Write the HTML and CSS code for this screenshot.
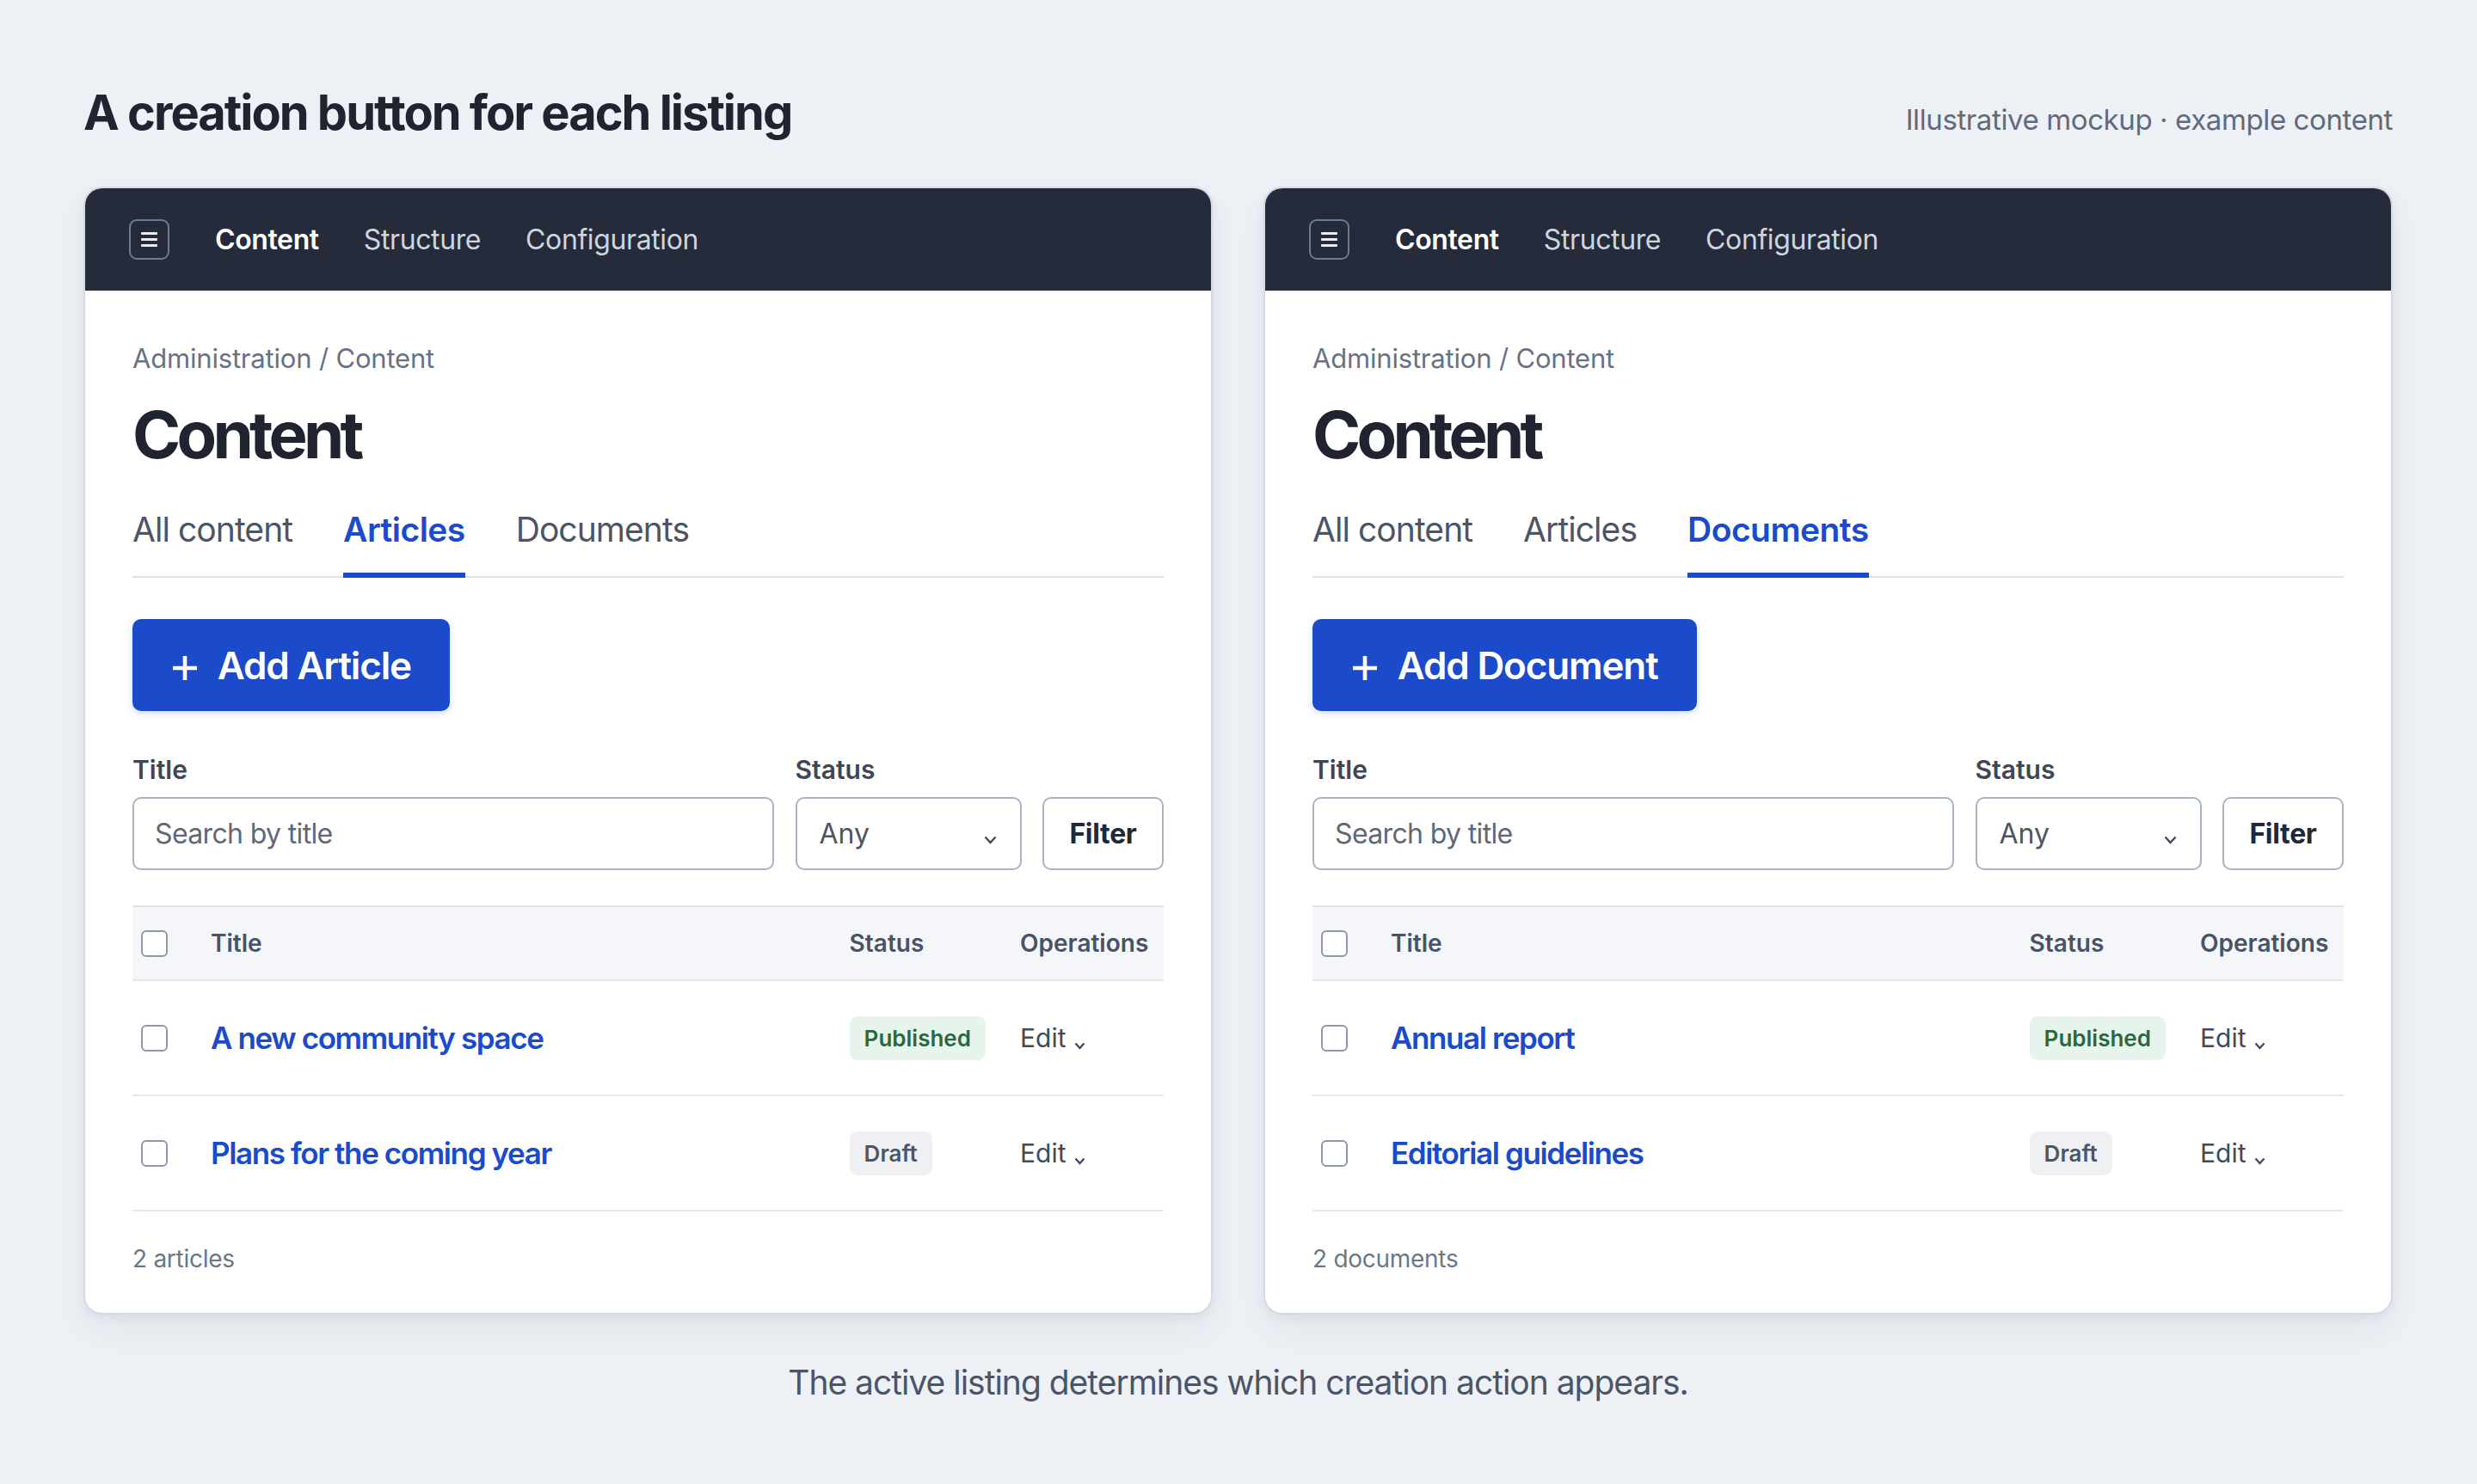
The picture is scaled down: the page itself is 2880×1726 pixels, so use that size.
FILE: index.html
```html
<!DOCTYPE html>
<html lang="en">
<head>
<meta charset="utf-8">
<title>A creation button for each listing</title>
<link rel="stylesheet" href="styles.css">
</head>
<body>
<div class="page">
  <header class="page-head">
    <h1 class="page-title">A creation button for each listing</h1>
    <p class="page-note">Illustrative mockup · example content</p>
  </header>

  <div class="panels">
    <section class="card">
      <nav class="topbar">
        <span class="menu-btn"><span></span><span></span><span></span></span>
        <a class="top-link is-active">Content</a>
        <a class="top-link">Structure</a>
        <a class="top-link">Configuration</a>
      </nav>
      <div class="card-body">
        <div class="crumbs">Administration / Content</div>
        <h2 class="heading">Content</h2>
        <div class="tabs">
          <span class="tab">All content</span>
          <span class="tab is-active">Articles</span>
          <span class="tab">Documents</span>
        </div>
        <button class="add-btn" type="button">
          <svg class="plus" width="28" height="28" viewBox="0 0 28 28"><path d="M14 0v28M0 14h28" stroke="currentColor" stroke-width="4.6" fill="none"/></svg>
          <span>Add Article</span>
        </button>
        <form class="filters">
          <label class="field">
            <span class="field-label">Title</span>
            <input class="input" type="text" placeholder="Search by title">
          </label>
          <div class="field">
            <span class="field-label">Status</span>
            <div class="select"><span>Any</span><svg width="15" height="10" viewBox="0 0 15 10"><polyline points="1.5,1.5 7.5,8 13.5,1.5" fill="none" stroke="currentColor" stroke-width="2.4"/></svg></div>
          </div>
          <button class="filter-btn" type="button">Filter</button>
        </form>
        <div class="table">
          <div class="row head">
            <div class="cell"><span class="check"></span></div>
            <div class="cell">Title</div>
            <div class="cell">Status</div>
            <div class="cell">Operations</div>
          </div>
          <div class="row">
            <div class="cell"><span class="check"></span></div>
            <div class="cell"><a class="title-link">A new community space</a></div>
            <div class="cell"><span class="badge badge-published">Published</span></div>
            <div class="cell edit">Edit<svg width="13" height="9" viewBox="0 0 13 9"><polyline points="1.5,1.5 6.5,7 11.5,1.5" fill="none" stroke="currentColor" stroke-width="2.3"/></svg></div>
          </div>
          <div class="row">
            <div class="cell"><span class="check"></span></div>
            <div class="cell"><a class="title-link">Plans for the coming year</a></div>
            <div class="cell"><span class="badge badge-draft">Draft</span></div>
            <div class="cell edit">Edit<svg width="13" height="9" viewBox="0 0 13 9"><polyline points="1.5,1.5 6.5,7 11.5,1.5" fill="none" stroke="currentColor" stroke-width="2.3"/></svg></div>
          </div>
        </div>
        <p class="count">2 articles</p>
      </div>
    </section>

    <section class="card">
      <nav class="topbar">
        <span class="menu-btn"><span></span><span></span><span></span></span>
        <a class="top-link is-active">Content</a>
        <a class="top-link">Structure</a>
        <a class="top-link">Configuration</a>
      </nav>
      <div class="card-body">
        <div class="crumbs">Administration / Content</div>
        <h2 class="heading">Content</h2>
        <div class="tabs">
          <span class="tab">All content</span>
          <span class="tab">Articles</span>
          <span class="tab is-active">Documents</span>
        </div>
        <button class="add-btn" type="button">
          <svg class="plus" width="28" height="28" viewBox="0 0 28 28"><path d="M14 0v28M0 14h28" stroke="currentColor" stroke-width="4.6" fill="none"/></svg>
          <span>Add Document</span>
        </button>
        <form class="filters">
          <label class="field">
            <span class="field-label">Title</span>
            <input class="input" type="text" placeholder="Search by title">
          </label>
          <div class="field">
            <span class="field-label">Status</span>
            <div class="select"><span>Any</span><svg width="15" height="10" viewBox="0 0 15 10"><polyline points="1.5,1.5 7.5,8 13.5,1.5" fill="none" stroke="currentColor" stroke-width="2.4"/></svg></div>
          </div>
          <button class="filter-btn" type="button">Filter</button>
        </form>
        <div class="table">
          <div class="row head">
            <div class="cell"><span class="check"></span></div>
            <div class="cell">Title</div>
            <div class="cell">Status</div>
            <div class="cell">Operations</div>
          </div>
          <div class="row">
            <div class="cell"><span class="check"></span></div>
            <div class="cell"><a class="title-link">Annual report</a></div>
            <div class="cell"><span class="badge badge-published">Published</span></div>
            <div class="cell edit">Edit<svg width="13" height="9" viewBox="0 0 13 9"><polyline points="1.5,1.5 6.5,7 11.5,1.5" fill="none" stroke="currentColor" stroke-width="2.3"/></svg></div>
          </div>
          <div class="row">
            <div class="cell"><span class="check"></span></div>
            <div class="cell"><a class="title-link">Editorial guidelines</a></div>
            <div class="cell"><span class="badge badge-draft">Draft</span></div>
            <div class="cell edit">Edit<svg width="13" height="9" viewBox="0 0 13 9"><polyline points="1.5,1.5 6.5,7 11.5,1.5" fill="none" stroke="currentColor" stroke-width="2.3"/></svg></div>
          </div>
        </div>
        <p class="count">2 documents</p>
      </div>
    </section>
  </div>

  <p class="caption">The active listing determines which creation action appears.</p>
</div>
</body>
</html>
```

FILE: styles.css
```css
* {
  box-sizing: border-box;
  margin: 0;
  padding: 0;
}

html,
body {
  background: #edf0f5;
}

body {
  font-family: Inter, "Noto Sans", "Liberation Sans", sans-serif;
  color: #1f2533;
}

.page {
  padding: 97px 98px 0 97px;
}

.page-head {
  display: flex;
  justify-content: space-between;
  align-items: baseline;
  margin-bottom: 52px;
}

.page-title {
  font-size: 56px;
  line-height: 68px;
  font-weight: 700;
  letter-spacing: -0.036em;
  color: #1f2430;
}

.page-note {
  font-size: 33px;
  line-height: 40px;
  letter-spacing: -0.012em;
  color: #5f6b7c;
}

.panels {
  display: grid;
  grid-template-columns: 1fr 1fr;
  column-gap: 59px;
}

.card {
  background: #fff;
  border: 2px solid #d4dbe6;
  border-radius: 22px;
  overflow: hidden;
  box-shadow: 0 4px 12px rgba(31, 41, 64, 0.05), 0 18px 40px rgba(31, 41, 64, 0.05);
}

.topbar {
  height: 119px;
  background: #252b3b;
  display: flex;
  align-items: center;
  padding-left: 51px;
}

.menu-btn {
  width: 47px;
  height: 47px;
  border: 2px solid #6c7b94;
  border-radius: 9px;
  display: flex;
  flex-direction: column;
  align-items: center;
  justify-content: center;
  gap: 3.7px;
  margin-right: 53px;
}

.menu-btn span {
  width: 19px;
  height: 3px;
  background: #e8ebf0;
  border-radius: 1px;
}

.top-link {
  font-size: 32px;
  line-height: 40px;
  letter-spacing: -0.012em;
  color: #cfd5de;
  text-decoration: none;
  margin-right: 52px;
}

.top-link.is-active {
  color: #fff;
  font-weight: 600;
}

.card-body {
  padding: 59.3px 55px 46.3px;
}

.crumbs {
  font-size: 31px;
  line-height: 40px;
  letter-spacing: -0.006em;
  color: #677286;
}

.heading {
  margin-top: 22.3px;
  font-size: 76px;
  line-height: 90px;
  font-weight: 700;
  letter-spacing: -0.062em;
  color: #1f2430;
}

.tabs {
  display: flex;
  gap: 59px;
  margin-top: 42.5px;
  border-bottom: 2px solid #dde2ea;
}

.tab {
  font-size: 39px;
  line-height: 48px;
  letter-spacing: -0.024em;
  color: #4b5565;
  padding-bottom: 25.9px;
  border-bottom: 6px solid transparent;
  margin-bottom: -2px;
}

.tab.is-active {
  color: #1a4bcc;
  font-weight: 600;
  letter-spacing: -0.014em;
  border-bottom-color: #1a4bcc;
}

.add-btn {
  margin-top: 48.3px;
  height: 107px;
  width: max-content;
  padding: 0 45px 0 46.7px;
  display: flex;
  align-items: center;
  gap: 24px;
  background: #1b4acb;
  color: #fff;
  border: none;
  border-radius: 10px;
  font-family: inherit;
  font-size: 44px;
  font-weight: 600;
  letter-spacing: -0.026em;
  line-height: 1;
  box-shadow: 0 3px 8px rgba(27, 74, 203, 0.18);
}

.add-btn .plus {
  margin-top: 7px;
  flex: none;
}

.filters {
  margin-top: 49.8px;
  display: grid;
  grid-template-columns: 1fr 263px 141px;
  column-gap: 24.5px;
  align-items: end;
}

.field {
  display: block;
}

.field-label {
  display: block;
  font-size: 30px;
  line-height: 36px;
  font-weight: 600;
  color: #3d4758;
  margin-bottom: 13.6px;
}

.input,
.select,
.filter-btn {
  height: 85px;
  border: 2px solid #a9b3c2;
  border-radius: 10px;
  background: #fff;
  font-family: inherit;
  font-size: 32px;
}

.input {
  display: block;
  width: 100%;
  padding: 0 24px;
  letter-spacing: -0.02em;
  color: #1f2533;
  outline: none;
}

.input::placeholder {
  color: #5f6878;
}

.select {
  display: flex;
  align-items: center;
  justify-content: space-between;
  padding: 0 27px 0 26px;
  color: #4b5563;
}

.select svg {
  color: #3f4b5e;
  margin-top: 16px;
}

.filter-btn {
  font-weight: 700;
  letter-spacing: -0.01em;
  color: #1f2937;
}

.table {
  margin-top: 41.4px;
}

.row {
  display: grid;
  grid-template-columns: 81px 1fr 198.4px 177px;
  align-items: center;
  height: 134px;
  border-bottom: 2px solid #e4e8ee;
}

.row.head {
  height: 88.3px;
  background: #f4f6f9;
  border-top: 2px solid #dfe4eb;
  font-size: 28px;
  font-weight: 600;
  color: #475366;
}

.cell {
  padding-left: 10px;
}

.check {
  display: block;
  width: 31px;
  height: 31px;
  border: 2px solid #8d99ab;
  border-radius: 6px;
  background: #fff;
}

.title-link {
  font-size: 35px;
  font-weight: 600;
  letter-spacing: -0.04em;
  color: #1a4bcc;
  text-decoration: none;
}

.badge {
  display: inline-flex;
  align-items: center;
  height: 51px;
  padding: 0 17px;
  border-radius: 9px;
  font-size: 26px;
  font-weight: 600;
}

.badge-published {
  background: #e7f4ec;
  color: #2a6844;
}

.badge-draft {
  background: #eef0f4;
  color: #4b5563;
}

.edit {
  font-size: 30px;
  color: #3f4b5e;
}

.edit svg {
  margin-left: 10px;
  vertical-align: -2.4px;
}

.count {
  margin-top: 37.3px;
  font-size: 28px;
  line-height: 34px;
  letter-spacing: -0.01em;
  color: #6b7688;
}

.caption {
  margin-top: 55.2px;
  text-align: center;
  font-size: 39px;
  line-height: 48px;
  letter-spacing: -0.026em;
  color: #4a5568;
}
```
